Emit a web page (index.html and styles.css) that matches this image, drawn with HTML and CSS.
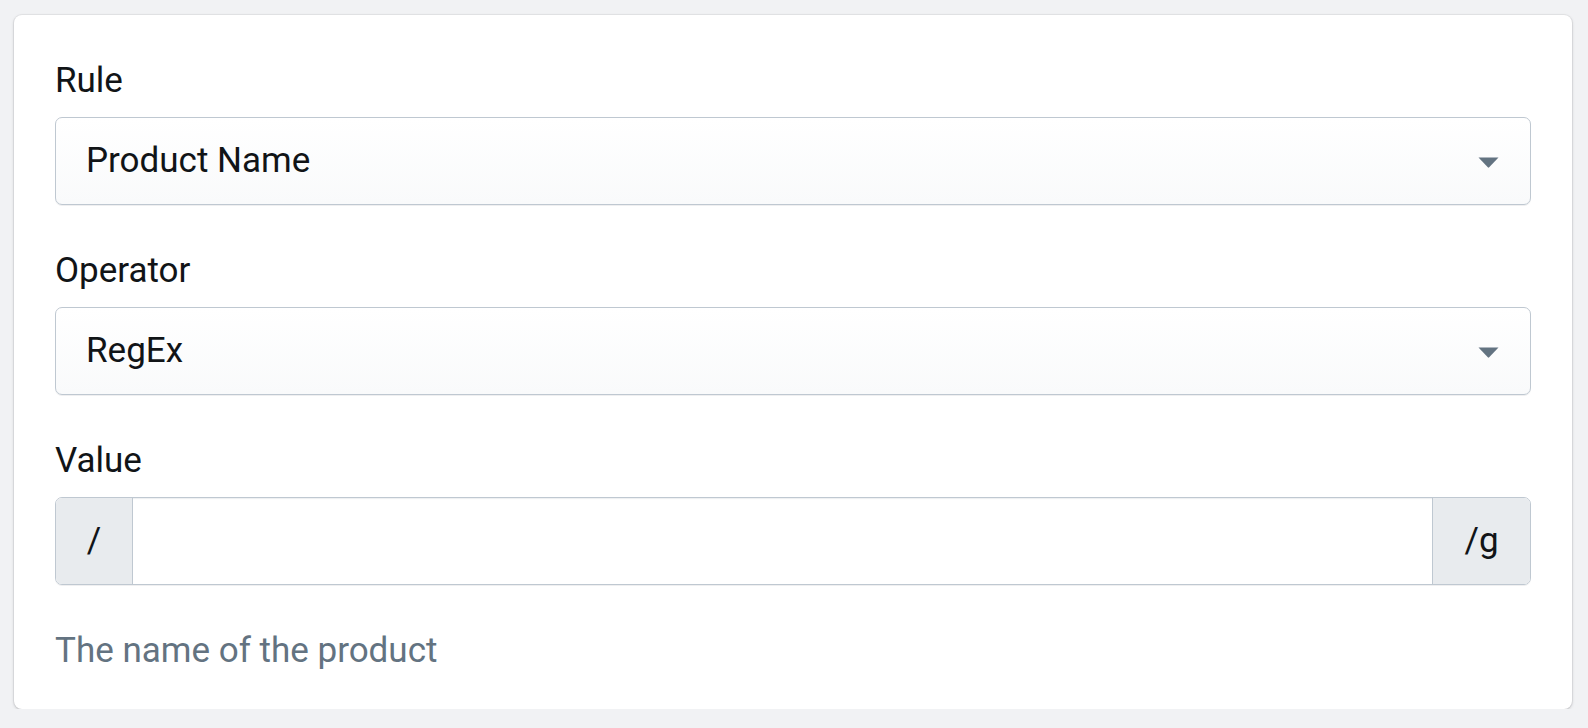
FILE: index.html
```html
<!DOCTYPE html>
<html lang="en">
<head>
<meta charset="utf-8">
<title>Rule</title>
<link rel="stylesheet" href="styles.css">
</head>
<body>
<div class="card">
  <div class="field">
    <div class="label">Rule</div>
    <div class="select">
      <span class="select-text">Product Name</span>
      <svg class="arrow" width="21" height="11" viewBox="0 0 21 11"><path d="M0.5 0.5 H20.5 L11.2 10.3 Q10.5 11 9.8 10.3 Z" fill="#637381"/></svg>
    </div>
  </div>
  <div class="field">
    <div class="label">Operator</div>
    <div class="select">
      <span class="select-text">RegEx</span>
      <svg class="arrow" width="21" height="11" viewBox="0 0 21 11"><path d="M0.5 0.5 H20.5 L11.2 10.3 Q10.5 11 9.8 10.3 Z" fill="#637381"/></svg>
    </div>
  </div>
  <div class="field">
    <div class="label">Value</div>
    <div class="group">
      <div class="addon addon-left">/</div>
      <div class="input"></div>
      <div class="addon addon-right">/g</div>
    </div>
  </div>
  <div class="help">The name of the product</div>
</div>
</body>
</html>
```
FILE: styles.css
```css
html, body {
  margin: 0;
  padding: 0;
}
body {
  background: #f1f2f4;
  padding: 15px 16px 0 14px;
  font-family: Roboto, "Liberation Sans", sans-serif;
  font-size: 35px;
  color: #111417;
}
.card {
  background: #fff;
  border-radius: 8px;
  box-shadow: 0 0 0 1px rgba(63, 63, 68, 0.06), 0 1px 3px 0 rgba(63, 63, 68, 0.26);
  padding: 42px 41px 34px 41px;
}
.field {
  margin-bottom: 42px;
}
.field:last-of-type {
  margin-bottom: 0;
}
.label {
  line-height: 48px;
  margin-bottom: 12px;
}
.select {
  height: 88px;
  box-sizing: border-box;
  border: 1px solid #bfc8d1;
  border-radius: 7px;
  background: linear-gradient(180deg, #ffffff, #f9fafb);
  box-shadow: 0 1px 0 0 rgba(22, 29, 37, 0.07);
  display: flex;
  align-items: center;
  justify-content: space-between;
  padding: 0 31px 0 30px;
}
.select-text {
  line-height: 48px;
}
.arrow {
  display: block;
  margin-top: 2px;
}
.group {
  height: 88px;
  box-sizing: border-box;
  border: 1px solid #bfc8d1;
  border-radius: 7px;
  display: flex;
  overflow: hidden;
  box-shadow: 0 1px 0 0 rgba(22, 29, 37, 0.07);
}
.addon {
  background: #e8ebee;
  display: flex;
  align-items: center;
  justify-content: center;
  line-height: 48px;
}
.addon-left {
  width: 76px;
  border-right: 1px solid #bfc8d1;
}
.addon-right {
  width: 97px;
  border-left: 1px solid #bfc8d1;
}
.input {
  flex: 1;
  background: #fff;
  box-shadow: inset 0 2px 1px -1px rgba(99, 115, 129, 0.12);
}
.help {
  margin-top: 34px;
  line-height: 48px;
  color: #637381;
}
```
